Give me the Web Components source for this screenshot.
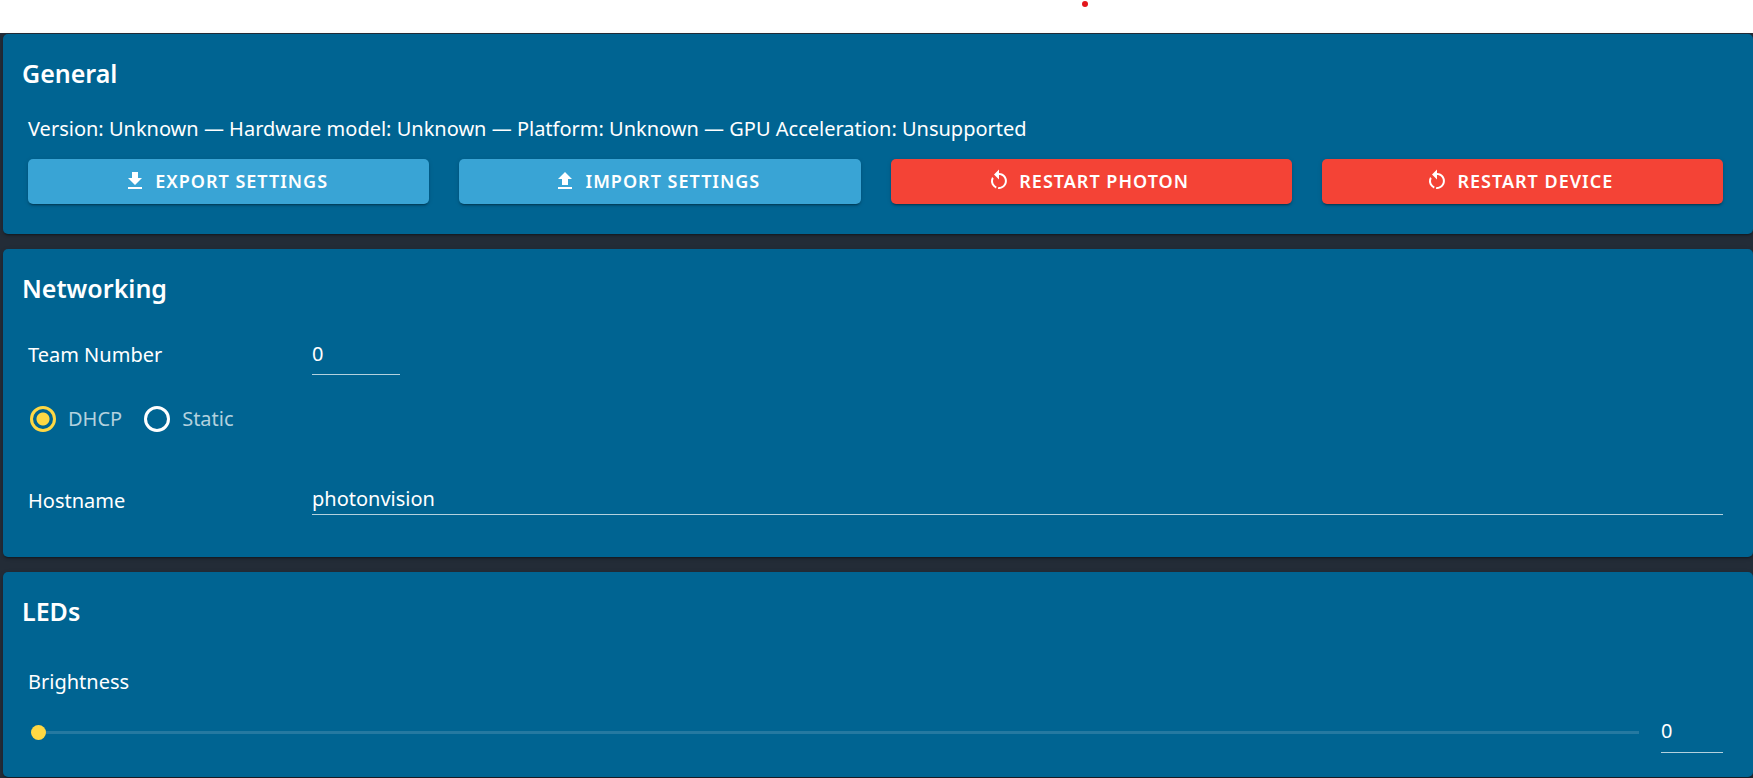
<!DOCTYPE html>
<html lang="en">
<head>
<meta charset="utf-8">
<title>Settings</title>
<style>
  body { margin: 0; background: #232c37; color: #fff; font: 20px/32px "Noto Sans", "Open Sans", sans-serif; }
</style>
</head>
<body>
<settings-page>
  <settings-card heading="General">
    <status-line>Version: Unknown — Hardware model: Unknown — Platform: Unknown — GPU Acceleration: Unsupported</status-line>
    <button-row>
      <action-button icon="download">Export Settings</action-button>
      <action-button icon="upload">Import Settings</action-button>
      <action-button icon="restart" tone="danger">Restart Photon</action-button>
      <action-button icon="restart" tone="danger">Restart Device</action-button>
    </button-row>
  </settings-card>
  <settings-card heading="Networking">
    <text-field label="Team Number" value="0" size="short"></text-field>
    <radio-choice label="Address mode" options="DHCP,Static" selected="DHCP"></radio-choice>
    <text-field label="Hostname" value="photonvision" size="full"></text-field>
  </settings-card>
  <settings-card heading="LEDs">
    <slider-field label="Brightness" value="0"></slider-field>
  </settings-card>
</settings-page>

<script>
const define = (name, render) => customElements.define(name, class extends HTMLElement {
  connectedCallback() {
    if (this.shadowRoot) return;
    const root = this.attachShadow({ mode: "open" });
    root.innerHTML = render(this);
  }
});

define("settings-page", () => `
  <style>
    :host { display: block; }
    header { height: 33px; background: #fff; display: flex; justify-content: center; }
    .dot { width: 6px; height: 6px; margin: 1px 0 0 416px; border-radius: 50%; background: #e3161b; }
    main { display: flex; flex-direction: column; gap: 15px; padding: 1px 0 1px 3px; }
  </style>
  <header><span class="dot"></span></header>
  <main><slot></slot></main>`);

define("settings-card", el => `
  <style>
    :host { display: block; background: #006492; border-radius: 5px; padding: 20px 30px 24px 25px;
      box-shadow: 0 3px 1px -2px rgba(0,0,0,.2), 0 2px 2px rgba(0,0,0,.14), 0 1px 5px rgba(0,0,0,.12); }
    h2 { margin: 0 0 21px -6px; font-size: 25px; line-height: 38px; font-weight: 600; }
  </style>
  <h2>${el.getAttribute("heading")}</h2>
  <slot></slot>`);

define("status-line", () => `
  <style>:host { display: block; margin-bottom: 14px; }</style>
  <slot></slot>`);

define("button-row", () => `
  <style>:host { display: grid; grid-template-columns: repeat(4, 1fr); gap: 30px; margin-bottom: 6px; }</style>
  <slot></slot>`);

const icons = {
  download: "M5,20H19V18H5M19,9H15V3H9V9H5L12,16L19,9Z",
  upload: "M9,16V10H5L12,3L19,10H15V16H9M5,20V18H19V20H5Z",
  restart: "M12,4C14.1,4 16.1,4.8 17.6,6.3C20.7,9.4 20.7,14.5 17.6,17.6C15.8,19.5 13.3,20.2 10.9,19.9L11.4,17.9C13.1,18.1 14.9,17.5 16.2,16.2C18.5,13.9 18.5,10.1 16.2,7.7C15.1,6.6 13.5,6 12,6V10.6L7,5.6L12,0.6V4M6.3,17.6C3.7,15 3.3,11 5.1,7.9L6.6,9.4C5.5,11.6 5.9,14.4 7.8,16.2C8.3,16.7 8.9,17.1 9.6,17.4L9,19.4C8,19 7.1,18.4 6.3,17.6Z"
};

define("action-button", el => `
  <style>
    :host { display: block; }
    button { display: flex; align-items: center; justify-content: center; gap: 8px; width: 100%; height: 45px;
      padding: 0 26px 2px 20px; border: 0; border-radius: 5px; background: #39a4d5; color: #fff;
      font: inherit; font-size: 18px; line-height: 24px; font-weight: 600; letter-spacing: 1px; text-transform: uppercase; cursor: pointer;
      box-shadow: 0 3px 1px -2px rgba(0,0,0,.2), 0 2px 2px rgba(0,0,0,.14), 0 1px 5px rgba(0,0,0,.12); }
    :host([tone="danger"]) button { background: #f44336; }
    svg { width: 24px; height: 24px; fill: currentColor; flex: none; }
  </style>
  <button type="button"><svg viewBox="0 0 24 24" aria-hidden="true"><path d="${icons[el.getAttribute("icon")]}"/></svg><span><slot></slot></span></button>`);

define("text-field", el => `
  <style>
    :host { display: grid; grid-template-columns: 284px 1fr; align-items: center; }
    input { box-sizing: border-box; width: 100%; padding: 0; border: 0; border-bottom: 1px solid #b3d1de; border-radius: 0; outline: 0;
      background: transparent; color: inherit; font: inherit; }
    :host([size="short"]) { padding-top: 6px; }
    :host([size="short"]) input { width: 88px; height: 41px; padding-bottom: 2px; }
    :host([size="full"]) { padding-bottom: 16px; }
    :host([size="full"]) input { height: 32px; }
    :host([size="full"]) label { padding-top: 4px; }
  </style>
  <label for="field">${el.getAttribute("label")}</label>
  <input id="field" type="text" value="${el.getAttribute("value")}">`);

define("radio-choice", el => `
  <style>
    :host { display: block; padding: 28px 0 46px; }
    div { display: flex; gap: 22px; }
    label { display: flex; align-items: center; gap: 12px; color: #b3d1de; }
    input { appearance: none; box-sizing: border-box; width: 26px; height: 26px; margin: 0; border: 3px solid #fff; border-radius: 50%; }
    label:first-child input { margin-left: 2px; }
    input:checked { border-color: #ffd843; background: radial-gradient(circle, #ffd843 6px, transparent 7px); }
  </style>
  <div role="radiogroup" aria-label="${el.getAttribute("label")}">
    ${el.getAttribute("options").split(",").map(o => `<label><input type="radio" name="mode" ${o === el.getAttribute("selected") ? "checked" : ""}>${o}</label>`).join("")}
  </div>`);

define("slider-field", el => `
  <style>
    :host { display: block; padding-top: 15px; }
    label { display: block; }
    .row { display: flex; align-items: center; gap: 22px; margin-top: 13px; }
    .range { appearance: none; flex: 1; min-width: 0; height: 16px; margin: 0 0 0 3px; background: transparent; }
    .range::-webkit-slider-runnable-track { height: 3px; background: #2579a1; }
    .range::-webkit-slider-thumb { appearance: none; width: 15px; height: 15px; margin-top: -6px; border-radius: 50%; background: #ffd843; }
    .value { box-sizing: border-box; width: 62px; height: 42px; padding: 0 0 2px; border: 0; border-bottom: 1px solid #b3d1de; border-radius: 0;
      background: transparent; color: inherit; font: inherit; }
  </style>
  <label for="level">${el.getAttribute("label")}</label>
  <div class="row">
    <input class="range" id="level" type="range" min="0" max="100" value="${el.getAttribute("value")}">
    <input class="value" type="text" aria-label="${el.getAttribute("label")} value" value="${el.getAttribute("value")}">
  </div>`);
</script>
</body>
</html>
